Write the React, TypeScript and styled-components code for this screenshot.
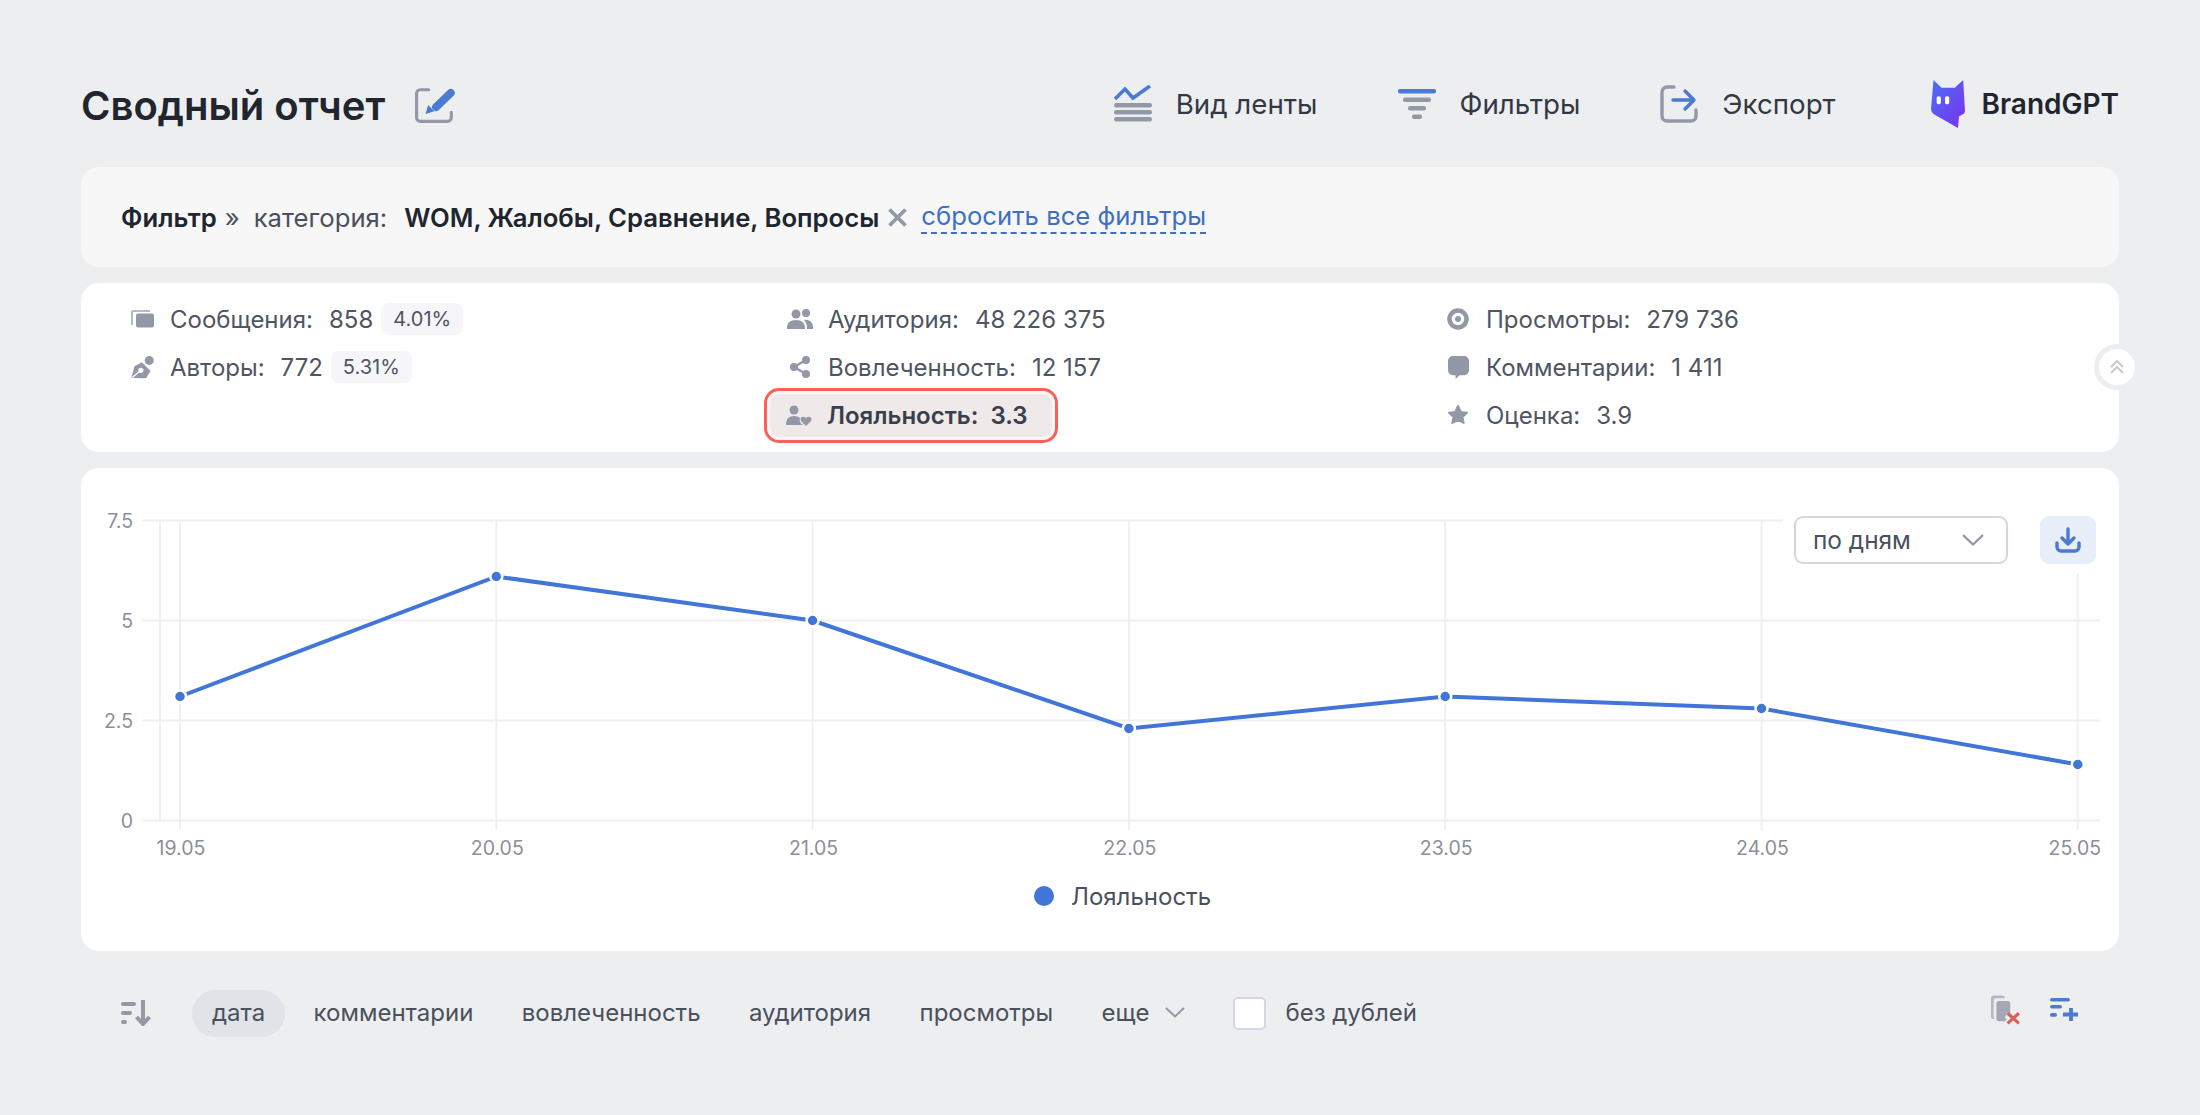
import React from 'react';
import styled, { createGlobalStyle } from 'styled-components';

const GlobalStyle = createGlobalStyle`
  html, body {
    margin: 0;
    background: #edeef0;
  }
  body {
    font-family: Inter, "Noto Sans", sans-serif;
    color: #4a505c;
  }
  * {
    box-sizing: border-box;
  }
`;

const Page = styled.div`
  width: 2200px;
  height: 1115px;
  padding: 77px 81px 0;
`;

const Header = styled.header`
  display: flex;
  align-items: center;
  height: 56px;
  margin-bottom: 34px;
`;

const Title = styled.h1`
  margin: 0;
  font-size: 40px;
  font-weight: 600;
  color: #20252e;
`;

const TitleEdit = styled.button`
  display: flex;
  margin-left: 30px;
  padding: 0;
  border: 0;
  background: none;
`;

const Actions = styled.nav`
  display: flex;
  align-items: center;
  margin-left: auto;
  margin-bottom: 2px;
`;

const Action = styled.div<{ $gap: number }>`
  display: flex;
  align-items: center;
  gap: 24px;
  margin-left: ${(p) => p.$gap}px;
  font-size: 27.7px;
  color: #333944;
`;

const Brand = styled.div`
  display: flex;
  align-items: center;
  gap: 15px;
  margin-left: 95px;
  font-size: 28px;
  font-weight: 600;
  color: #20252e;
`;

const FilterBar = styled.section`
  display: flex;
  align-items: center;
  height: 100px;
  padding-left: 40px;
  margin-bottom: 16px;
  border-radius: 18px;
  background: #f7f7f8;
  font-size: 25.7px;
`;

const FilterTitle = styled.b`
  font-weight: 600;
  color: #20252e;
`;

const Quote = styled.span`
  margin: 0 14px 0 8px;
  color: #4a505c;
`;

const FilterKey = styled.span`
  color: #4a505c;
`;

const FilterValue = styled.b`
  margin-left: 17px;
  font-weight: 600;
  color: #20252e;
`;

const FilterClear = styled.span`
  display: flex;
  margin: 0 14px 0 9px;
`;

const ResetLink = styled.a`
  color: #3f6fc4;
  border-bottom: 2px dashed #3f6fc4;
  line-height: 1.25;
`;

const StatsCard = styled.section`
  position: relative;
  display: grid;
  grid-template-columns: repeat(3, 658px);
  height: 169px;
  padding: 12px 0 0 48px;
  margin-bottom: 16px;
  border-radius: 18px;
  background: #fff;
`;

const StatsColumn = styled.div`
  display: flex;
  flex-direction: column;
`;

const Stat = styled.div<{ $active?: boolean }>`
  display: flex;
  align-items: center;
  height: 48px;
  font-size: 24px;
  color: ${(p) => (p.$active ? '#39404b' : '#4f5561')};
  font-weight: ${(p) => (p.$active ? 600 : 400)};
`;

const ActiveWrap = styled.div`
  align-self: flex-start;
  margin: -3px 0 0 -23px;
  padding: 3px;
  border: 3px solid #fb6058;
  border-radius: 15px;
  background: #fff7f6;

  ${Stat} {
    height: 43px;
    padding: 0 25px 0 16px;
    border-radius: 9px;
    background: #efe9ea;
  }
`;

const StatIcon = styled.span`
  display: flex;
  justify-content: center;
  width: 28px;
  margin: 0 14px 0 -1px;
`;

const StatValue = styled.span<{ $tight?: boolean }>`
  margin-left: ${(p) => (p.$tight ? 12 : 16)}px;
`;

const Percent = styled.span`
  margin-left: 8px;
  padding: 0 12px;
  height: 32px;
  line-height: 32px;
  border-radius: 8px;
  background: #f6f6f8;
  font-size: 20px;
`;

const Collapse = styled.button`
  position: absolute;
  top: 61px;
  right: -21px;
  display: flex;
  align-items: center;
  justify-content: center;
  width: 46px;
  height: 46px;
  padding: 0;
  border: 5px solid #edeef0;
  border-radius: 50%;
  background: #fff;
`;

const ChartCard = styled.section`
  position: relative;
  height: 483px;
  margin-bottom: 39px;
  border-radius: 18px;
  background: #fff;
`;

const ChartSvg = styled.svg`
  display: block;
`;

const GridLine = styled.line`
  stroke: #f0f0f2;
  stroke-width: 2;
`;

const AxisLabel = styled.text`
  font-family: Inter, sans-serif;
  font-size: 19.5px;
  fill: #8b8f99;
`;

const ChartControls = styled.div`
  position: absolute;
  top: 48px;
  right: 0;
  display: flex;
  align-items: flex-start;
  gap: 32px;
  padding: 0 23px 10px 11px;
  background: #fff;
`;

const Select = styled.div`
  display: flex;
  align-items: center;
  justify-content: space-between;
  width: 214px;
  height: 48px;
  padding: 0 22px 0 17px;
  border: 2px solid #d3d7df;
  border-radius: 9px;
  background: #fff;
  font-size: 24.4px;
  color: #4a505c;
`;

const DownloadButton = styled.button`
  display: flex;
  align-items: center;
  justify-content: center;
  width: 56px;
  height: 48px;
  padding: 0;
  border: 0;
  border-radius: 9px;
  background: #e8eef9;
`;

const Legend = styled.div`
  display: flex;
  align-items: center;
  justify-content: center;
  gap: 17px;
  height: 56px;
  padding-left: 45px;
  font-size: 24px;
  color: #4a505c;
`;

const LegendDot = styled.i`
  width: 20px;
  height: 20px;
  border-radius: 50%;
  background: #4176d8;
`;

const SortBar = styled.div`
  display: flex;
  align-items: center;
  height: 47px;
  font-size: 24px;
  color: #4a505c;
`;

const SortIcon = styled.span`
  display: flex;
  margin: 0 41px 2px 40px;
`;

const SortItem = styled.span<{ $active?: boolean }>`
  display: flex;
  align-items: center;
  height: 47px;
  padding: 0 20px 2px;
  margin-right: 8.4px;
  border-radius: 24px;
  background: ${(p) => (p.$active ? '#e0e3e8' : 'transparent')};
`;

const More = styled(SortItem)`
  gap: 16px;
  margin-right: 28px;
`;

const Checkbox = styled.span`
  width: 33px;
  height: 33px;
  margin-right: 19px;
  border: 2px solid #d3d7df;
  border-radius: 5px;
  background: #fff;
`;

const CheckLabel = styled.span`
  padding-bottom: 2px;
`;

const SortTools = styled.div`
  display: flex;
  align-items: center;
  gap: 29px;
  margin: 0 41px 8px auto;
`;

const BLUE = '#4c7ad1';
const GREY = '#9398a6';

const points = [3.1, 6.1, 5, 2.3, 3.1, 2.8, 1.4];
const dates = ['19.05', '20.05', '21.05', '22.05', '23.05', '24.05', '25.05'];
const xAt = (i: number) => 99 + i * 316.3;
const yAt = (v: number) => 352.5 - v * 40;

const Chart = () => (
  <ChartSvg width="2038" height="400" viewBox="0 0 2038 400">
    {[7.5, 5, 2.5, 0].map((v) => (
      <GridLine key={v} x1="61" x2="2019" y1={yAt(v)} y2={yAt(v)} />
    ))}
    <GridLine x1="79" x2="79" y1="52" y2="352" />
    {dates.map((d, i) => (
      <GridLine key={d} x1={xAt(i)} x2={xAt(i)} y1="52" y2="362" />
    ))}
    {[7.5, 5, 2.5, 0].map((v) => (
      <AxisLabel key={v} x="52" y={yAt(v) + 7} textAnchor="end">
        {v}
      </AxisLabel>
    ))}
    {dates.map((d, i) => (
      <AxisLabel key={d} x={xAt(i) + (i === 6 ? -3 : 1)} y="387" textAnchor="middle">
        {d}
      </AxisLabel>
    ))}
    <polyline
      points={points.map((v, i) => `${xAt(i)},${yAt(v)}`).join(' ')}
      fill="none"
      stroke="#4176d8"
      strokeWidth="4"
    />
    {points.map((v, i) => (
      <circle key={i} cx={xAt(i)} cy={yAt(v)} r="6" fill="#4176d8" stroke="#fff" strokeWidth="2.5" />
    ))}
  </ChartSvg>
);

const EditIcon = () => (
  <svg width="40" height="36" viewBox="10 9 38 34" fill="none">
    <path d="M23 11.5H15a3.5 3.5 0 0 0-3.5 3.5V38a3.5 3.5 0 0 0 3.5 3.5h26a3.5 3.5 0 0 0 3.5-3.5V33" stroke={GREY} strokeWidth="3" strokeLinecap="round" />
    <path d="M44 14.5L30 28" stroke={BLUE} strokeWidth="7.5" strokeLinecap="round" />
    <path d="M20 34.5l2.5-8.5 6 6z" fill={BLUE} />
  </svg>
);

const FeedIcon = () => (
  <svg width="38" height="38" viewBox="0 0 38 38" fill="none">
    <path d="M1 14l10-10 8 9L36 1" stroke={BLUE} strokeWidth="3.6" fill="none" />
    <rect y="18" width="38" height="4.5" rx="2.2" fill={GREY} />
    <rect y="25" width="38" height="4.5" rx="2.2" fill={GREY} />
    <rect y="32" width="38" height="4.5" rx="2.2" fill={GREY} />
  </svg>
);

const FilterIcon = () => (
  <svg width="38" height="30" viewBox="0 0 38 30">
    <rect width="38" height="4.5" rx="2" fill={BLUE} />
    <rect x="5" y="8.5" width="28" height="4.5" rx="2" fill={GREY} />
    <rect x="10" y="17" width="18" height="4.5" rx="2" fill={GREY} />
    <rect x="14" y="25.5" width="10" height="4.5" rx="2" fill={GREY} />
  </svg>
);

const ExportIcon = () => (
  <svg width="38" height="38" viewBox="0 0 38 38" fill="none">
    <path d="M14 2H7a5 5 0 0 0-5 5v24a5 5 0 0 0 5 5h24a5 5 0 0 0 5-5v-6" stroke={GREY} strokeWidth="3.4" strokeLinecap="round" />
    <path d="M13 15h20M25 6l9 9-9 9" stroke={BLUE} strokeWidth="3.4" strokeLinecap="round" strokeLinejoin="round" />
  </svg>
);

const BrandLogo = () => (
  <svg width="36" height="50" viewBox="35 25 103 143">
    <defs>
      <linearGradient id="logo" x1="0" y1="0" x2="1" y2="1">
        <stop offset="0" stopColor="#4b70f6" />
        <stop offset="1" stopColor="#7b30f0" />
      </linearGradient>
    </defs>
    <path d="M45 28L68 50H106L130 28l5 87q0 10-10 13l-7 4-3 33-70-40q-7-5-7-15z" fill="url(#logo)" />
    <rect x="54" y="74" width="12" height="23" rx="5" fill="#fff" />
    <rect x="78" y="74" width="12" height="23" rx="5" fill="#fff" />
  </svg>
);

const MessagesIcon = () => (
  <svg width="23" height="18" viewBox="0 0 23 18">
    <path d="M2 0h17v2H3a1 1 0 0 0-1 1v12H0V2a2 2 0 0 1 2-2z" fill="#b6bac4" />
    <rect x="5" y="3.5" width="18" height="14" rx="2" fill={GREY} />
  </svg>
);

const PenIcon = () => (
  <svg width="25" height="24" viewBox="28 165 78 75">
    <circle cx="88" cy="182" r="14" fill={GREY} />
    <path d="M32 237l10-37 23-12 27 27-14 23z" fill={GREY} />
    <circle cx="62" cy="213" r="8" fill="#fff" />
    <path d="M35 235l24-20" stroke="#fff" strokeWidth="4" />
  </svg>
);

const AudienceIcon = () => (
  <svg width="26" height="20" viewBox="0 0 26 20" fill={GREY}>
    <circle cx="9" cy="5" r="4.5" />
    <circle cx="19" cy="4" r="4" />
    <path d="M0 19c0-5 3-8 9-8s9 3 9 8v1H0z" />
    <path d="M20 20v-1c0-3-1-6-3-8 5-1 9 2 9 7v2z" />
  </svg>
);

const ShareIcon = () => (
  <svg width="20" height="22" viewBox="0 0 20 22" fill={GREY}>
    <circle cx="16" cy="4" r="4" />
    <circle cx="4" cy="11" r="4" />
    <circle cx="16" cy="18" r="4" />
    <path d="M4 11L16 4M4 11l12 7" stroke={GREY} strokeWidth="2.4" />
  </svg>
);

const LoyalIcon = () => (
  <svg width="26" height="22" viewBox="0 0 26 22" fill={GREY}>
    <circle cx="8" cy="5" r="4.5" />
    <path d="M0 20c0-6 3-9 8-9 3 0 5 1 6 2-1 3 0 5 3 7z" />
    <path d="M20 21l-5-5c-2-3 2-6 5-3 3-3 7 0 5 3z" />
  </svg>
);

const EyeIcon = () => (
  <svg width="24" height="24" viewBox="0 0 24 24" fill="none">
    <circle cx="12" cy="12" r="8.5" stroke={GREY} strokeWidth="4.5" />
    <circle cx="12" cy="12" r="3" fill={GREY} />
  </svg>
);

const CommentIcon = () => (
  <svg width="21" height="23" viewBox="0 0 22 24" fill={GREY}>
    <path d="M5 0h12a5 5 0 0 1 5 5v10a5 5 0 0 1-5 5h-5l-4 4v-4H5a5 5 0 0 1-5-5V5a5 5 0 0 1 5-5z" />
  </svg>
);

const StarIcon = () => (
  <svg width="22" height="22" viewBox="0 0 22 22" fill={GREY} stroke={GREY} strokeWidth="2" strokeLinejoin="round">
    <path d="M11 2l2.8 6 6.2.7-4.6 4.2 1.3 6.1L11 15.8 5.3 19l1.3-6.1L2 8.7 8.2 8z" />
  </svg>
);

const Chevron = ({ color = GREY, size = 20 }: { color?: string; size?: number }) => (
  <svg width={size} height={size * 0.55} viewBox="0 0 20 11" fill="none">
    <path d="M1.5 1.5L10 9.5l8.5-8" stroke={color} strokeWidth="2" strokeLinecap="round" />
  </svg>
);

const DoubleUp = () => (
  <svg width="16" height="18" viewBox="0 0 16 18" fill="none" stroke="#c5c9d1" strokeWidth="2">
    <path d="M2 9l6-6 6 6M2 15l6-6 6 6" />
  </svg>
);

const DownloadIcon = () => (
  <svg width="26" height="26" viewBox="0 0 26 26" fill="none" stroke={BLUE} strokeWidth="3.4" strokeLinecap="round" strokeLinejoin="round">
    <path d="M13 2v14M7 11l6 6 6-6" />
    <path d="M2 16v4a4 4 0 0 0 4 4h14a4 4 0 0 0 4-4v-4" />
  </svg>
);

const ClearIcon = () => (
  <svg width="19" height="19" viewBox="0 0 19 19" stroke={GREY} strokeWidth="3.8">
    <path d="M1.5 1.5l16 16M17.5 1.5l-16 16" />
  </svg>
);

const SortDownIcon = () => (
  <svg width="30" height="26" viewBox="0 0 30 26" fill={GREY}>
    <rect y="2" width="15" height="4" rx="2" />
    <rect y="11" width="11" height="4" rx="2" />
    <rect y="20" width="6" height="4" rx="2" />
    <path d="M22 0v22M15.5 17l6.5 7 6.5-7" fill="none" stroke={GREY} strokeWidth="4" />
  </svg>
);

const ClearFeedIcon = () => (
  <svg width="30" height="30" viewBox="0 0 28 27" fill="none">
    <rect x="0" y="0" width="13" height="22" rx="2.5" fill="#b4b8c2" />
    <rect x="2.5" y="2.5" width="13" height="20" rx="2.5" fill="#edeef0" />
    <rect x="5" y="5" width="13" height="19" rx="2.5" fill="#a4a8b4" />
    <path d="M14.5 18l11.5 8M26 16.5L15 26" stroke="#edeef0" strokeWidth="6" />
    <path d="M15.5 16.5l10.5 9.5M26 16.5L15.5 26" stroke="#d9605a" strokeWidth="3" />
  </svg>
);

const AddFeedIcon = () => (
  <svg width="28" height="23" viewBox="0 0 28 23" fill={BLUE}>
    <rect width="20" height="3.6" rx="1.8" />
    <rect y="7" width="12" height="3.6" rx="1.8" />
    <rect y="15" width="7" height="3.8" rx="1.9" />
    <path d="M21 10v13M13 16.5h15" stroke={BLUE} strokeWidth="3.8" />
  </svg>
);

export default function App() {
  return (
    <Page>
      <GlobalStyle />
      <Header>
        <Title>Сводный отчет</Title>
        <TitleEdit>
          <EditIcon />
        </TitleEdit>
        <Actions>
          <Action $gap={0}>
            <FeedIcon />
            Вид ленты
          </Action>
          <Action $gap={80}>
            <FilterIcon />
            Фильтры
          </Action>
          <Action $gap={80}>
            <ExportIcon />
            Экспорт
          </Action>
          <Brand>
            <BrandLogo />
            BrandGPT
          </Brand>
        </Actions>
      </Header>

      <FilterBar>
        <FilterTitle>Фильтр</FilterTitle>
        <Quote>»</Quote>
        <FilterKey>категория:</FilterKey>
        <FilterValue>WOM, Жалобы, Сравнение, Вопросы</FilterValue>
        <FilterClear>
          <ClearIcon />
        </FilterClear>
        <ResetLink>сбросить все фильтры</ResetLink>
      </FilterBar>

      <StatsCard>
        <StatsColumn>
          <Stat>
            <StatIcon><MessagesIcon /></StatIcon>
            Сообщения:<StatValue>858</StatValue>
            <Percent>4.01%</Percent>
          </Stat>
          <Stat>
            <StatIcon><PenIcon /></StatIcon>
            Авторы:<StatValue>772</StatValue>
            <Percent>5.31%</Percent>
          </Stat>
        </StatsColumn>
        <StatsColumn>
          <Stat>
            <StatIcon><AudienceIcon /></StatIcon>
            Аудитория:<StatValue>48 226 375</StatValue>
          </Stat>
          <Stat>
            <StatIcon><ShareIcon /></StatIcon>
            Вовлеченность:<StatValue>12 157</StatValue>
          </Stat>
          <ActiveWrap>
            <Stat $active>
              <StatIcon><LoyalIcon /></StatIcon>
              Лояльность:<StatValue $tight>3.3</StatValue>
            </Stat>
          </ActiveWrap>
        </StatsColumn>
        <StatsColumn>
          <Stat>
            <StatIcon><EyeIcon /></StatIcon>
            Просмотры:<StatValue>279 736</StatValue>
          </Stat>
          <Stat>
            <StatIcon><CommentIcon /></StatIcon>
            Комментарии:<StatValue>1 411</StatValue>
          </Stat>
          <Stat>
            <StatIcon><StarIcon /></StatIcon>
            Оценка:<StatValue>3.9</StatValue>
          </Stat>
        </StatsColumn>
        <Collapse>
          <DoubleUp />
        </Collapse>
      </StatsCard>

      <ChartCard>
        <Chart />
        <ChartControls>
          <Select>
            по дням
            <Chevron size={22} />
          </Select>
          <DownloadButton>
            <DownloadIcon />
          </DownloadButton>
        </ChartControls>
        <Legend>
          <LegendDot />
          Лояльность
        </Legend>
      </ChartCard>

      <SortBar>
        <SortIcon>
          <SortDownIcon />
        </SortIcon>
        <SortItem $active>дата</SortItem>
        <SortItem>комментарии</SortItem>
        <SortItem>вовлеченность</SortItem>
        <SortItem>аудитория</SortItem>
        <SortItem>просмотры</SortItem>
        <More>
          еще
          <Chevron size={20} />
        </More>
        <Checkbox />
        <CheckLabel>без дублей</CheckLabel>
        <SortTools>
          <ClearFeedIcon />
          <AddFeedIcon />
        </SortTools>
      </SortBar>
    </Page>
  );
}
